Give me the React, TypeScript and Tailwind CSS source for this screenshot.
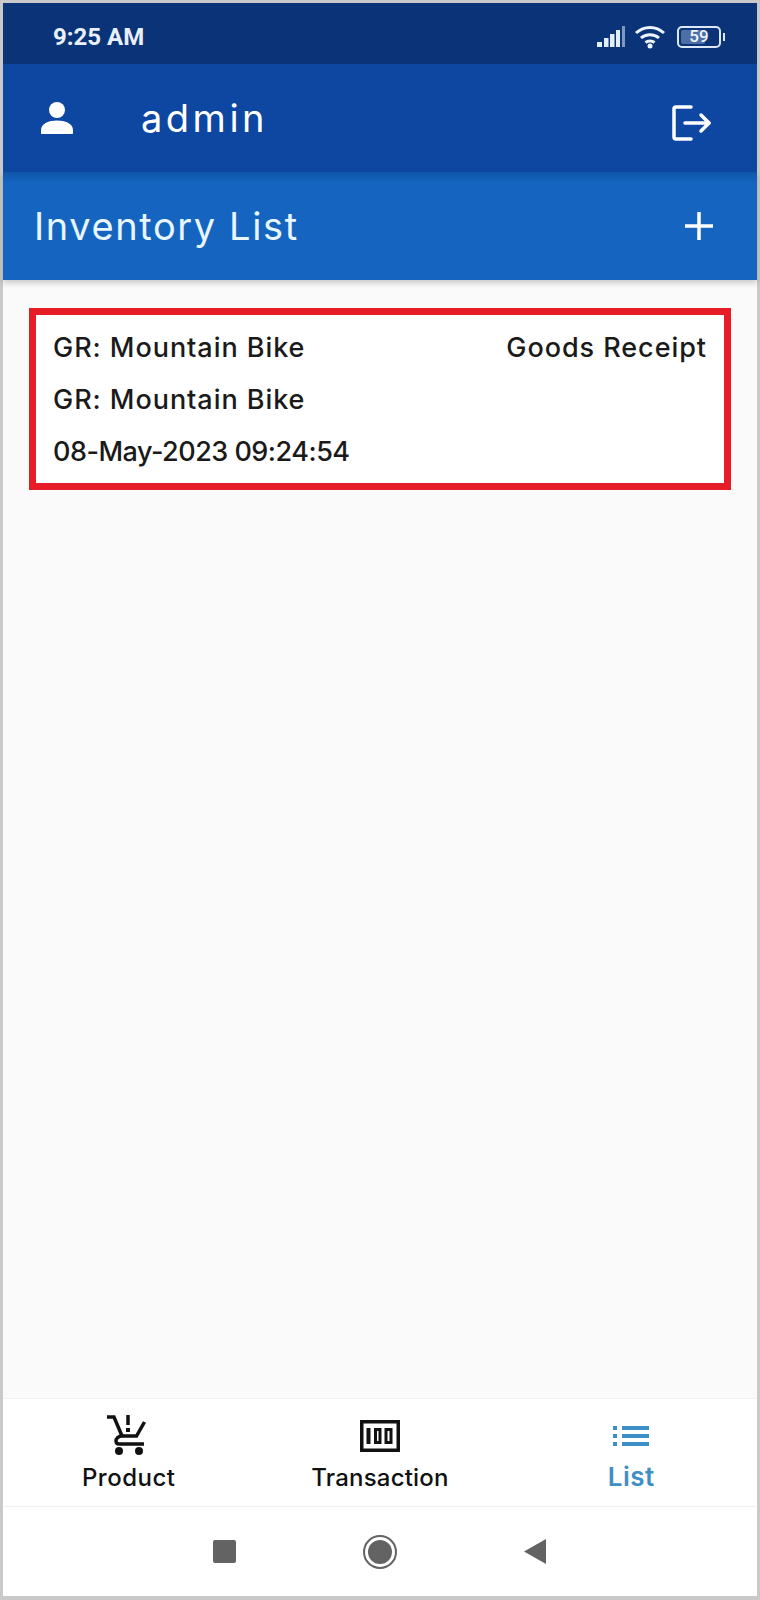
import React from "react";

const Signal = () => (
  <svg width="30" height="22" viewBox="0 0 30 22" className="block">
    <rect x="1" y="16" width="5" height="5" fill="#e3edf9" />
    <rect x="8" y="12" width="4.5" height="9" fill="#e3edf9" />
    <rect x="14" y="8" width="4.5" height="13" fill="#e3edf9" />
    <rect x="20" y="4" width="4" height="17" fill="#e3edf9" />
    <rect x="26" y="0" width="3" height="21" fill="#7d98c2" />
  </svg>
);

const Wifi = () => (
  <svg width="32" height="24" viewBox="0 0 32 24" fill="none" stroke="#eef4fc" strokeWidth="3" className="block">
    <path d="M2 8C10 0.5 22 0.5 30 8" />
    <path d="M7 13C12 8.5 20 8.5 25 13" />
    <path d="M11.500 17.500C14 15.500 18 15.500 20.500 17.500" />
    <circle cx="16" cy="21" r="2.500" fill="#eef4fc" stroke="none" />
  </svg>
);

const Battery = () => (
  <div className="flex items-center gap-[2px]">
    <div className="relative flex h-[22px] w-[44px] items-center justify-center overflow-hidden rounded-[5px] border-2 border-[#dce7f7]">
      <div className="absolute inset-y-[2px] left-[2px] w-[24px] rounded-[2px] bg-[#4d6fa6]" />
      <span className="relative text-[17px] font-medium leading-none text-[#eef4fc] [font-family:Roboto,sans-serif]">59</span>
    </div>
    <div className="h-[8px] w-[2px] bg-[#dce7f7]" />
  </div>
);

const Person = () => (
  <svg width="32" height="32" viewBox="0 0 32 32" fill="white" className="block">
    <circle cx="16" cy="8" r="8" />
    <path d="M0 28C0 21.500 8 18.500 16 18.500C24 18.500 32 21.500 32 28V31C32 31.600 31.600 32 31 32H1C0.400 32 0 31.600 0 31Z" />
  </svg>
);

const Logout = () => (
  <svg width="40" height="36" viewBox="0 0 40 36" fill="none" stroke="white" strokeWidth="3.500" strokeLinecap="round" strokeLinejoin="round" className="block">
    <path d="M19 2H4C2.800 2 2 2.800 2 4V32C2 33.200 2.800 34 4 34H19" />
    <path d="M13 18H37" />
    <path d="M29 10L37 18L29 26" />
  </svg>
);

const Plus = () => (
  <svg width="28" height="28" viewBox="0 0 28 28" stroke="white" strokeWidth="3.500" className="block">
    <path d="M14 0V28M0 14H28" />
  </svg>
);

const Cart = () => (
  <svg width="40" height="42" viewBox="0 0 40 42" fill="none" stroke="#111" strokeWidth="3.500" className="block">
    <path d="M0 3H7L15 22" />
    <path d="M37.500 8L29.500 22H15C11 22 9 25 9 27C9 29 10 30 12 30H37" />
    <path d="M21 1V11" />
    <rect x="19" y="14" width="4" height="4" fill="#111" stroke="none" />
    <circle cx="12" cy="37" r="4" fill="#111" stroke="none" />
    <circle cx="32" cy="37" r="4" fill="#111" stroke="none" />
  </svg>
);

const Cash = () => (
  <svg width="40" height="32" viewBox="0 0 40 32" fill="none" stroke="#111" strokeWidth="3.500" className="block">
    <rect x="1.750" y="1.750" width="36.500" height="28.500" />
    <rect x="6.500" y="8" width="4" height="16" fill="#111" stroke="none" />
    <rect x="15.500" y="9.500" width="4.500" height="13" strokeWidth="3" />
    <rect x="26" y="9.500" width="5" height="13" strokeWidth="3" />
  </svg>
);

const ListIcon = () => (
  <svg width="36" height="20" viewBox="0 0 36 20" fill="#3f8fc7" className="block">
    <rect x="0" y="0" width="4" height="4" />
    <rect x="0" y="8" width="4" height="4" />
    <rect x="0" y="16" width="4" height="4" />
    <rect x="9" y="0" width="27" height="4" />
    <rect x="9" y="8" width="27" height="4" />
    <rect x="9" y="16" width="27" height="4" />
  </svg>
);

const Row = ({ children }: { children: React.ReactNode }) => (
  <div className="flex h-[52px] items-center justify-between text-[27px] font-medium leading-none tracking-[0.95px] text-[#1a1a1a]">
    {children}
  </div>
);

export default function App() {
  return (
    <div className="flex h-[1600px] w-[760px] flex-col border-x-[3px] border-t-[3px] border-b-[4px] border-[#c9c9c9] bg-[#fafafa] [font-family:Inter,sans-serif]">
      <div className="flex h-[61px] items-center justify-between bg-[#0b3478] pl-[50px] pr-[32px] pt-[6px]">
        <span className="text-[24px] font-bold text-[#e9f0fa] [font-family:Roboto,sans-serif]">9:25 AM</span>
        <div className="flex items-center gap-[11px]">
          <div className="-mr-[3px]">
            <Signal />
          </div>
          <Wifi />
          <Battery />
        </div>
      </div>
      <div className="flex h-[108px] items-center justify-between bg-[#0d47a1] pl-[38px] pr-[45px]">
        <div className="flex items-center gap-[68px]">
          <Person />
          <span className="text-[38px] leading-none tracking-[3.500px] text-white">admin</span>
        </div>
        <div className="pt-[9px]">
          <Logout />
        </div>
      </div>
      <div className="relative flex h-[108px] items-center justify-between bg-[#1565c0] bg-gradient-to-b from-[#0f54a8] from-0% to-[#1565c0] to-10% pl-[31px] pr-[44px] shadow-[0_3px_6px_rgba(0,0,0,0.2)]">
        <span className="text-[38px] leading-none tracking-[1.600px] text-[#e8f6ff]">Inventory List</span>
        <Plus />
      </div>
      <div className="flex-1 px-[26px] pt-[28px]">
        <div className="border-[7px] border-[#e61c27] bg-white px-[17px] py-[6px]">
          <Row>
            <span>GR: Mountain Bike</span>
            <span>Goods Receipt</span>
          </Row>
          <Row>
            <span>GR: Mountain Bike</span>
          </Row>
          <Row>
            <span className="tracking-[-0.5px]">08-May-2023 09:24:54</span>
          </Row>
        </div>
      </div>
      <div className="flex h-[108px] items-start border-t border-[#f1f1f1] bg-white">
        <div className="flex flex-1 flex-col items-center">
          <div className="mr-[4px] flex h-[57px] items-end justify-center">
            <Cart />
          </div>
          <div className="mt-[6px] text-[24px] font-medium leading-[32px] tracking-[0.5px] text-[#111]">Product</div>
        </div>
        <div className="flex flex-1 flex-col items-center">
          <div className="flex h-[57px] items-end justify-center pb-[4px]">
            <Cash />
          </div>
          <div className="mt-[6px] text-[24px] font-medium leading-[32px] tracking-[0.2px] text-[#111]">Transaction</div>
        </div>
        <div className="flex flex-1 flex-col items-center">
          <div className="flex h-[57px] items-end justify-center pb-[10px]">
            <ListIcon />
          </div>
          <div className="mt-[5px] text-[26px] font-semibold leading-[32px] tracking-[0.5px] text-[#3f8fc7]">List</div>
        </div>
      </div>
      <div className="flex h-[90px] items-center justify-center gap-[127px] border-t border-[#f1f1f1] bg-white">
        <div className="h-[23px] w-[23px] rounded-[2px] bg-[#636363]" />
        <div className="flex h-[34px] w-[34px] items-center justify-center rounded-full border-[2px] border-[#636363]">
          <div className="h-[24px] w-[24px] rounded-full bg-[#636363]" />
        </div>
        <svg width="23" height="25" viewBox="0 0 23 25" fill="#636363" className="block">
          <path d="M0 12.500L22 0V25Z" />
        </svg>
      </div>
    </div>
  );
}
